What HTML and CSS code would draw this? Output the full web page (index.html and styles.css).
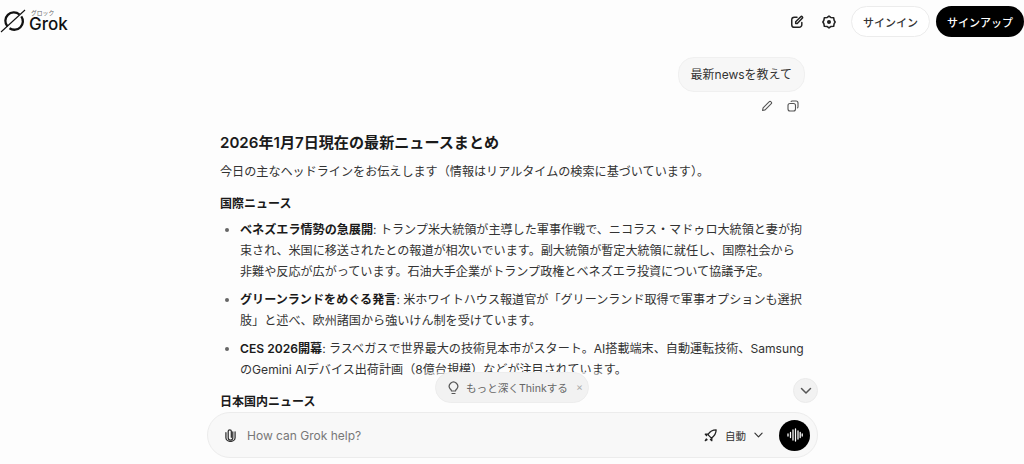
FILE: index.html
```html
<!DOCTYPE html>
<html lang="ja">
<head>
    <meta charset="UTF-8">
    <title>Grok</title>
    <link rel="stylesheet" href="styles.css">
</head>
<body>
    <div class="page">
        <header class="topbar">
            <div class="brand">
                <svg class="brand-mark" width="28" height="34" viewBox="0 0 28 34" fill="none" stroke="#111">
                    <path d="M19.500 14.500A8.500 8.500 0 0 0 7.500 26.500" stroke-width="2.300"/>
                    <path d="M9.500 28.200A8.500 8.500 0 0 0 21.300 16.300" stroke-width="2.300"/>
                    <path d="M25 10L1 32" stroke-width="1.100"/>
                </svg>
                <div class="brand-text">
                    <span class="brand-kana">グロック</span>
                    <span class="brand-name">Grok</span>
                </div>
            </div>
            <div class="top-actions">
                <svg class="top-icon" width="14" height="14" viewBox="0 0 16 16" fill="none" stroke="#222" stroke-width="1.700" stroke-linecap="round" stroke-linejoin="round">
                    <path d="M8 2.500H5a3 3 0 0 0-3 3V11a3 3 0 0 0 3 3h5.500a3 3 0 0 0 3-3V8.500"/>
                    <path d="M6.500 9.700V7.800L12.300 2a1.200 1.200 0 0 1 1.700 1.700L8.300 9.700z"/>
                </svg>
                <svg class="top-icon gear" width="14" height="14" viewBox="0 0 16 16" fill="none" stroke="#222" stroke-width="1.800" stroke-linejoin="round">
                    <path d="M8 1.300l2 1.500 3.300.3.600 3L15 8l-1.100 1.900-.6 3-3.300.3L8 14.700l-2-1.500-3.300-.3-.6-3L1 8l1.100-1.900.6-3L6 2.800z"/>
                    <circle cx="8" cy="8" r="1.400" fill="#222"/>
                </svg>
                <button class="btn btn-light">サインイン</button>
                <button class="btn btn-dark">サインアップ</button>
            </div>
        </header>

        <main class="chat">
            <div class="user-row">
                <div class="bubble">最新newsを教えて</div>
                <div class="bubble-tools">
                    <svg width="12" height="12" viewBox="0 0 12 12" fill="none" stroke="#555" stroke-width="1.100" stroke-linejoin="round">
                        <path d="M1.500 10.500l.6-2.600L8.300 1.700a1 1 0 0 1 1.500 0l.5.5a1 1 0 0 1 0 1.500L4.100 9.900z"/>
                    </svg>
                    <svg width="12" height="12" viewBox="0 0 12 12" fill="none" stroke="#555" stroke-width="1.100">
                        <rect x="1" y="3.500" width="7.500" height="7.500" rx="2"/>
                        <path d="M3.800 1.700Q4.300 1 5.200 1H9a2 2 0 0 1 2 2v3.800Q11 7.700 10.300 8.200"/>
                    </svg>
                </div>
            </div>

            <article class="answer">
                <h1>2026年1月7日現在の最新ニュースまとめ</h1>
                <p class="lead">今日の主なヘッドラインをお伝えします（情報はリアルタイムの検索に基づいています）。</p>
                <h2>国際ニュース</h2>
                <ul>
                    <li><strong>ベネズエラ情勢の急展開</strong>: トランプ米大統領が主導した軍事作戦で、ニコラス・マドゥロ大統領と妻が拘束され、米国に移送されたとの報道が相次いでいます。副大統領が暫定大統領に就任し、国際社会から非難や反応が広がっています。石油大手企業がトランプ政権とベネズエラ投資について協議予定。</li>
                    <li><strong>グリーンランドをめぐる発言</strong>: 米ホワイトハウス報道官が「グリーンランド取得で軍事オプションも選択肢」と述べ、欧州諸国から強いけん制を受けています。</li>
                    <li><strong>CES 2026開幕</strong>: ラスベガスで世界最大の技術見本市がスタート。AI搭載端末、自動運転技術、SamsungのGemini AIデバイス出荷計画（8億台規模）などが注目されています。</li>
                </ul>
                <h2>日本国内ニュース</h2>
            </article>
        </main>

        <div class="chip-fade"></div>
        <div class="think-chip">
            <svg width="13" height="14" viewBox="0 0 13 14" fill="none" stroke="#555" stroke-width="1.200" stroke-linecap="round">
                <path d="M4.500 10Q4.300 8.900 3.300 8A4.200 4.200 0 1 1 9.700 8Q8.700 8.900 8.500 10z"/>
                <path d="M5 12.500h3"/>
            </svg>
            <span>もっと深くThinkする</span>
            <span class="chip-close">×</span>
        </div>

        <button class="scroll-down">
            <svg width="12" height="8" viewBox="0 0 12 8" fill="none" stroke="#555" stroke-width="1.500" stroke-linecap="round" stroke-linejoin="round">
                <path d="M1.500 1.500L6 6l4.500-4.500"/>
            </svg>
        </button>

        <div class="composer">
            <svg class="clip" width="11" height="14" viewBox="0 0 12 15" fill="none" stroke="#333" stroke-width="1.400" stroke-linecap="round">
                <path d="M8.500 4v6.500a2.500 2.500 0 0 1-5 0V3.500a1.700 1.700 0 0 1 3.400 0v6.500"/>
                <path d="M1 5v5.500a5 4 0 0 0 10 0V4"/>
            </svg>
            <span class="placeholder">How can Grok help?</span>
            <div class="model">
                <svg width="13" height="13" viewBox="0 0 15 15" fill="none" stroke="#222" stroke-width="1.500" stroke-linejoin="round">
                    <path d="M14 1Q8 1 4.500 6.500L8.500 10.500Q14 7 14 1z"/>
                    <path d="M4.800 6H1.500L3.500 8M9 10.200V13.500L7 11.500"/>
                    <path d="M3 11l-1.500 2.500L4 12"/>
                </svg>
                <span>自動</span>
                <svg width="9" height="6" viewBox="0 0 10 6" fill="none" stroke="#333" stroke-width="1.300" stroke-linecap="round" stroke-linejoin="round">
                    <path d="M1 1l4 4 4-4"/>
                </svg>
            </div>
            <button class="voice">
                <svg width="16" height="14" viewBox="0 0 16 14" stroke="#fff" stroke-width="1.300" stroke-linecap="round">
                    <path d="M1 6v2M3.500 4.500v5M6 2v10M8.500 1v12M11 3v8M13.200 4.500v5M15.200 6v2"/>
                </svg>
            </button>
        </div>
    </div>
</body>
</html>
```
FILE: styles.css
```css
* {
    box-sizing: border-box;
}
html, body {
    margin: 0;
    height: 100%;
}
body {
    font-family: Inter, "Noto Sans CJK JP", sans-serif;
    background-color: #fdfdfd;
    color: #222;
    overflow: hidden;
}
.page {
    position: relative;
    height: 464px;
    overflow: hidden;
}
.topbar {
    display: flex;
    justify-content: space-between;
    align-items: center;
    height: 42px;
}
.brand {
    display: flex;
    align-items: flex-start;
    gap: 1px;
    height: 42px;
}
.brand-text {
    display: flex;
    flex-direction: column;
    padding-top: 9px;
}
.brand-kana {
    font-size: 5.800px;
    line-height: 7px;
    color: #666;
    margin-left: 2px;
}
.brand-name {
    font-size: 17px;
    font-weight: 500;
    line-height: 16px;
    color: #111;
}
.top-actions {
    display: flex;
    align-items: center;
    padding-top: 1px;
}
.top-icon {
    margin-right: 18px;
}
.gear {
    margin-right: 15px;
}
.btn {
    height: 31px;
    border-radius: 16px;
    font-family: inherit;
    font-size: 11px;
    font-weight: 500;
    padding: 0;
}
.btn-light {
    width: 79px;
    background-color: #fff;
    color: #333;
    border: 1px solid #ececec;
    margin-right: 6px;
}
.btn-dark {
    width: 88px;
    background-color: #000;
    color: #fff;
    border: none;
}
.chat {
    width: 585px;
    margin-left: 220px;
}
.user-row {
    display: flex;
    flex-direction: column;
    align-items: flex-end;
    padding-top: 15px;
}
.bubble {
    height: 35px;
    line-height: 33px;
    padding: 0 12px;
    font-size: 12px;
    background-color: #f7f7f7;
    border: 1px solid #f0f0f0;
    border-radius: 16px;
    color: #333;
}
.bubble-tools {
    display: flex;
    gap: 14px;
    height: 12px;
    margin-top: 8px;
    padding-right: 6px;
}
.answer h1 {
    margin: 19px 0 0;
    font-size: 15.100px;
    line-height: 24px;
    font-weight: 600;
    color: #1a1a1a;
}
.lead {
    margin: 6px 0 0;
    font-size: 12.100px;
    line-height: 21px;
    color: #333;
}
.answer h2 {
    margin: 11px 0 0;
    font-size: 12px;
    line-height: 21px;
    font-weight: 600;
    color: #1a1a1a;
}
.answer ul {
    margin: 5px 0 0;
    padding: 0 0 0 20px;
    font-size: 12.100px;
    line-height: 21px;
    color: #333;
}
.answer li {
    margin-bottom: 7px;
}
.answer li::marker {
    color: #666;
}
.answer strong {
    font-weight: 600;
    color: #1a1a1a;
}
.answer ul + h2 {
    margin-top: 11px;
}
.chip-fade {
    position: absolute;
    left: 410px;
    top: 372px;
    width: 210px;
    height: 12px;
    background: linear-gradient(90deg, transparent, #fdfdfd 30%, #fdfdfd 75%, transparent);
}
.think-chip {
    position: absolute;
    left: 435px;
    top: 372px;
    width: 154px;
    height: 31px;
    display: flex;
    align-items: center;
    padding-left: 11px;
    gap: 6px;
    background-color: #f2f2f2;
    border: 1px solid #ededed;
    border-radius: 16px;
    font-size: 10.600px;
    color: #666;
    white-space: nowrap;
}
.chip-close {
    margin-left: 2px;
    color: #aaa;
}
.scroll-down {
    position: absolute;
    left: 793px;
    top: 378px;
    width: 25px;
    height: 25px;
    display: flex;
    align-items: center;
    justify-content: center;
    padding: 0;
    background-color: #f2f2f2;
    border: 1px solid #ebebeb;
    border-radius: 50%;
}
.composer {
    position: absolute;
    left: 207px;
    top: 412px;
    width: 611px;
    height: 46px;
    display: flex;
    align-items: center;
    padding: 0 7px 0 17px;
    background-color: #f8f8f8;
    border: 1px solid #ececec;
    border-radius: 23px;
}
.placeholder {
    margin-left: 11px;
    font-size: 12px;
    color: #777;
}
.model {
    display: flex;
    align-items: center;
    margin-left: auto;
    gap: 8px;
    font-size: 10.500px;
    color: #333;
}
.voice {
    width: 31px;
    height: 31px;
    margin-left: 16px;
    display: flex;
    align-items: center;
    justify-content: center;
    padding: 0;
    background-color: #000;
    border: none;
    border-radius: 50%;
}
```
